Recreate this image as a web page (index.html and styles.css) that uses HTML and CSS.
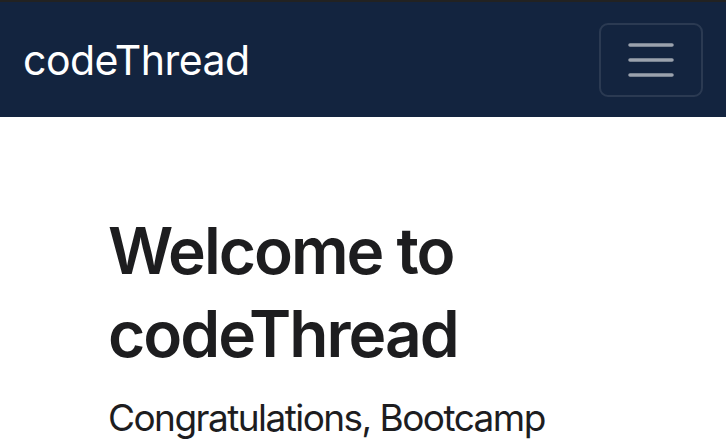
FILE: index.html
```html
<!DOCTYPE html>
<html lang="en">
<head>
<meta charset="utf-8">
<title>codeThread</title>
<link rel="stylesheet" href="styles.css">
</head>
<body>
<nav class="navbar">
  <a class="brand" href="#">codeThread</a>
  <button class="toggler" type="button" aria-label="Toggle navigation">
    <svg width="46" height="34" viewBox="0 0 46 34" aria-hidden="true">
      <path d="M2 2H44M2 17H44M2 32H44" stroke="#9ba2ad" stroke-width="3.5" stroke-linecap="round"/>
    </svg>
  </button>
</nav>
<main class="hero">
  <h1 class="title">Welcome to codeThread</h1>
  <p class="lead">Congratulations, Bootcamp</p>
</main>
</body>
</html>
```
FILE: styles.css
```css
html, body {
  margin: 0;
  padding: 0;
  background: #fff;
  font-family: Inter, "Liberation Sans", sans-serif;
  color: #1d1d1f;
}
body {
  border-top: 2px solid #222;
}
.navbar {
  height: 115px;
  background: #13243f;
  display: flex;
  align-items: center;
  justify-content: space-between;
  padding: 0 23px;
  box-sizing: border-box;
}
.brand {
  color: #fff;
  text-decoration: none;
  font-size: 41px;
  font-weight: 400;
  letter-spacing: -0.5px;
}
.toggler {
  width: 104px;
  height: 74px;
  border: 2px solid rgba(255,255,255,0.1);
  border-radius: 9px;
  background: transparent;
  display: flex;
  align-items: center;
  justify-content: center;
  padding: 0;
}
.toggler svg { display: block; }
.hero {
  padding: 92px 108px 0;
  width: 460px;
}
.title {
  margin: 0;
  font-size: 64px;
  font-weight: 600;
  line-height: 83px;
  letter-spacing: -2px;
}
.lead {
  margin: 21px 0 0;
  font-size: 37px;
  font-weight: 400;
  line-height: 1.2;
  letter-spacing: -1.55px;
  white-space: nowrap;
}
```
